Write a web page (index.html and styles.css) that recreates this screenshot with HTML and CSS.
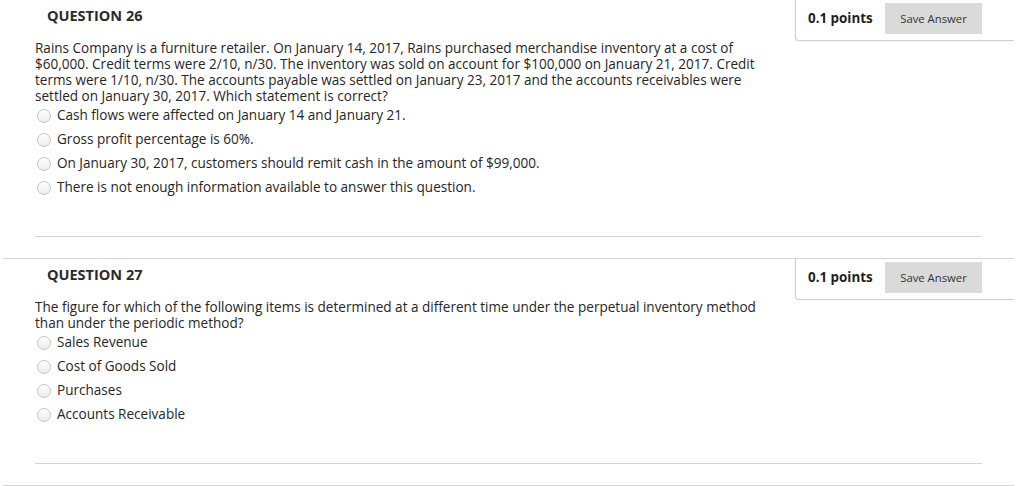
FILE: index.html
```html
<!DOCTYPE html>
<html>
<head>
<meta charset="utf-8">
<link rel="stylesheet" href="styles.css">
</head>
<body>
<div class="page">
  <div class="question">
    <div class="q-head">
      <h3 class="q-title">QUESTION 26</h3>
      <div class="points-box">
        <span class="points">0.1 points</span>
        <button class="save">Save Answer</button>
      </div>
    </div>
    <p class="q-text">Rains Company is a furniture retailer. On January 14, 2017, Rains purchased merchandise inventory at a cost of $60,000. Credit terms were 2/10, n/30. The inventory was sold on account for $100,000 on January 21, 2017. Credit terms were 1/10, n/30. The accounts payable was settled on January 23, 2017 and the accounts receivables were settled on January 30, 2017. Which statement is correct?</p>
    <ul class="options">
      <li class="option"><span class="radio"></span>Cash flows were affected on January 14 and January 21.</li>
      <li class="option"><span class="radio"></span>Gross profit percentage is 60%.</li>
      <li class="option"><span class="radio"></span>On January 30, 2017, customers should remit cash in the amount of $99,000.</li>
      <li class="option"><span class="radio"></span>There is not enough information available to answer this question.</li>
    </ul>
    <hr class="q-rule">
  </div>
  <div class="question">
    <div class="q-head">
      <h3 class="q-title">QUESTION 27</h3>
      <div class="points-box">
        <span class="points">0.1 points</span>
        <button class="save">Save Answer</button>
      </div>
    </div>
    <p class="q-text">The figure for which of the following items is determined at a different time under the perpetual inventory method than under the periodic method?</p>
    <ul class="options">
      <li class="option"><span class="radio"></span>Sales Revenue</li>
      <li class="option"><span class="radio"></span>Cost of Goods Sold</li>
      <li class="option"><span class="radio"></span>Purchases</li>
      <li class="option"><span class="radio"></span>Accounts Receivable</li>
    </ul>
    <hr class="q-rule">
  </div>
  <div class="question"></div>
</div>
</body>
</html>
```

FILE: styles.css
```css
* { box-sizing: border-box; }
html, body { margin: 0; padding: 0; background: #fff; }
body {
  font-family: "Open Sans", "Liberation Sans", sans-serif;
  color: #262626;
  overflow: hidden;
}
.page {
  margin: -1px 0 0 3px;
  width: 1011px;
}
.question {
  border-top: 1px solid #d4d4d4;
}
.q-head {
  display: flex;
  justify-content: space-between;
  align-items: flex-start;
  height: 41px;
}
.q-title {
  margin: 0;
  padding: 7px 0 0 44px;
  font-size: 14.5px;
  line-height: 18px;
  font-weight: 700;
  color: #2b2b2b;
}
.points-box {
  width: 219px;
  height: 41px;
  border-left: 1px solid #d0d0d0;
  border-bottom: 1px solid #d0d0d0;
  border-bottom-left-radius: 4px;
  box-shadow: -1px 1px 1px rgba(0,0,0,0.04);
  display: flex;
  align-items: flex-start;
  padding: 3px 0 0 12px;
}
.points {
  font-size: 13.4px;
  font-weight: 700;
  line-height: 31px;
  color: #1f1f1f;
  width: 77px;
}
.save {
  width: 97px;
  height: 31px;
  border: none;
  border-radius: 0;
  background: #dadada;
  font-family: "Open Sans", "Liberation Sans", sans-serif;
  font-size: 11.3px;
  color: #333;
  padding: 0;
}
.q-text {
  margin: -1px 0 0 32px;
  width: 728px;
  font-size: 13.55px;
  line-height: 16px;
  color: #262626;
}
.options {
  list-style: none;
  margin: -1px 0 0 0;
  padding: 0 0 0 34px;
}
.option {
  display: flex;
  align-items: center;
  height: 24px;
  font-size: 13.55px;
  color: #262626;
}
.radio {
  width: 14px;
  height: 14px;
  border: 1px solid #c4c4c4;
  border-radius: 50%;
  background: linear-gradient(#ffffff, #ececec);
  margin: 2px 6px 0 0;
  flex: none;
}
.q-rule {
  margin: 37px 0 21px 32px;
  width: 947px;
  border: none;
  border-top: 1px solid #d4d4d4;
  height: 0;
}
```
